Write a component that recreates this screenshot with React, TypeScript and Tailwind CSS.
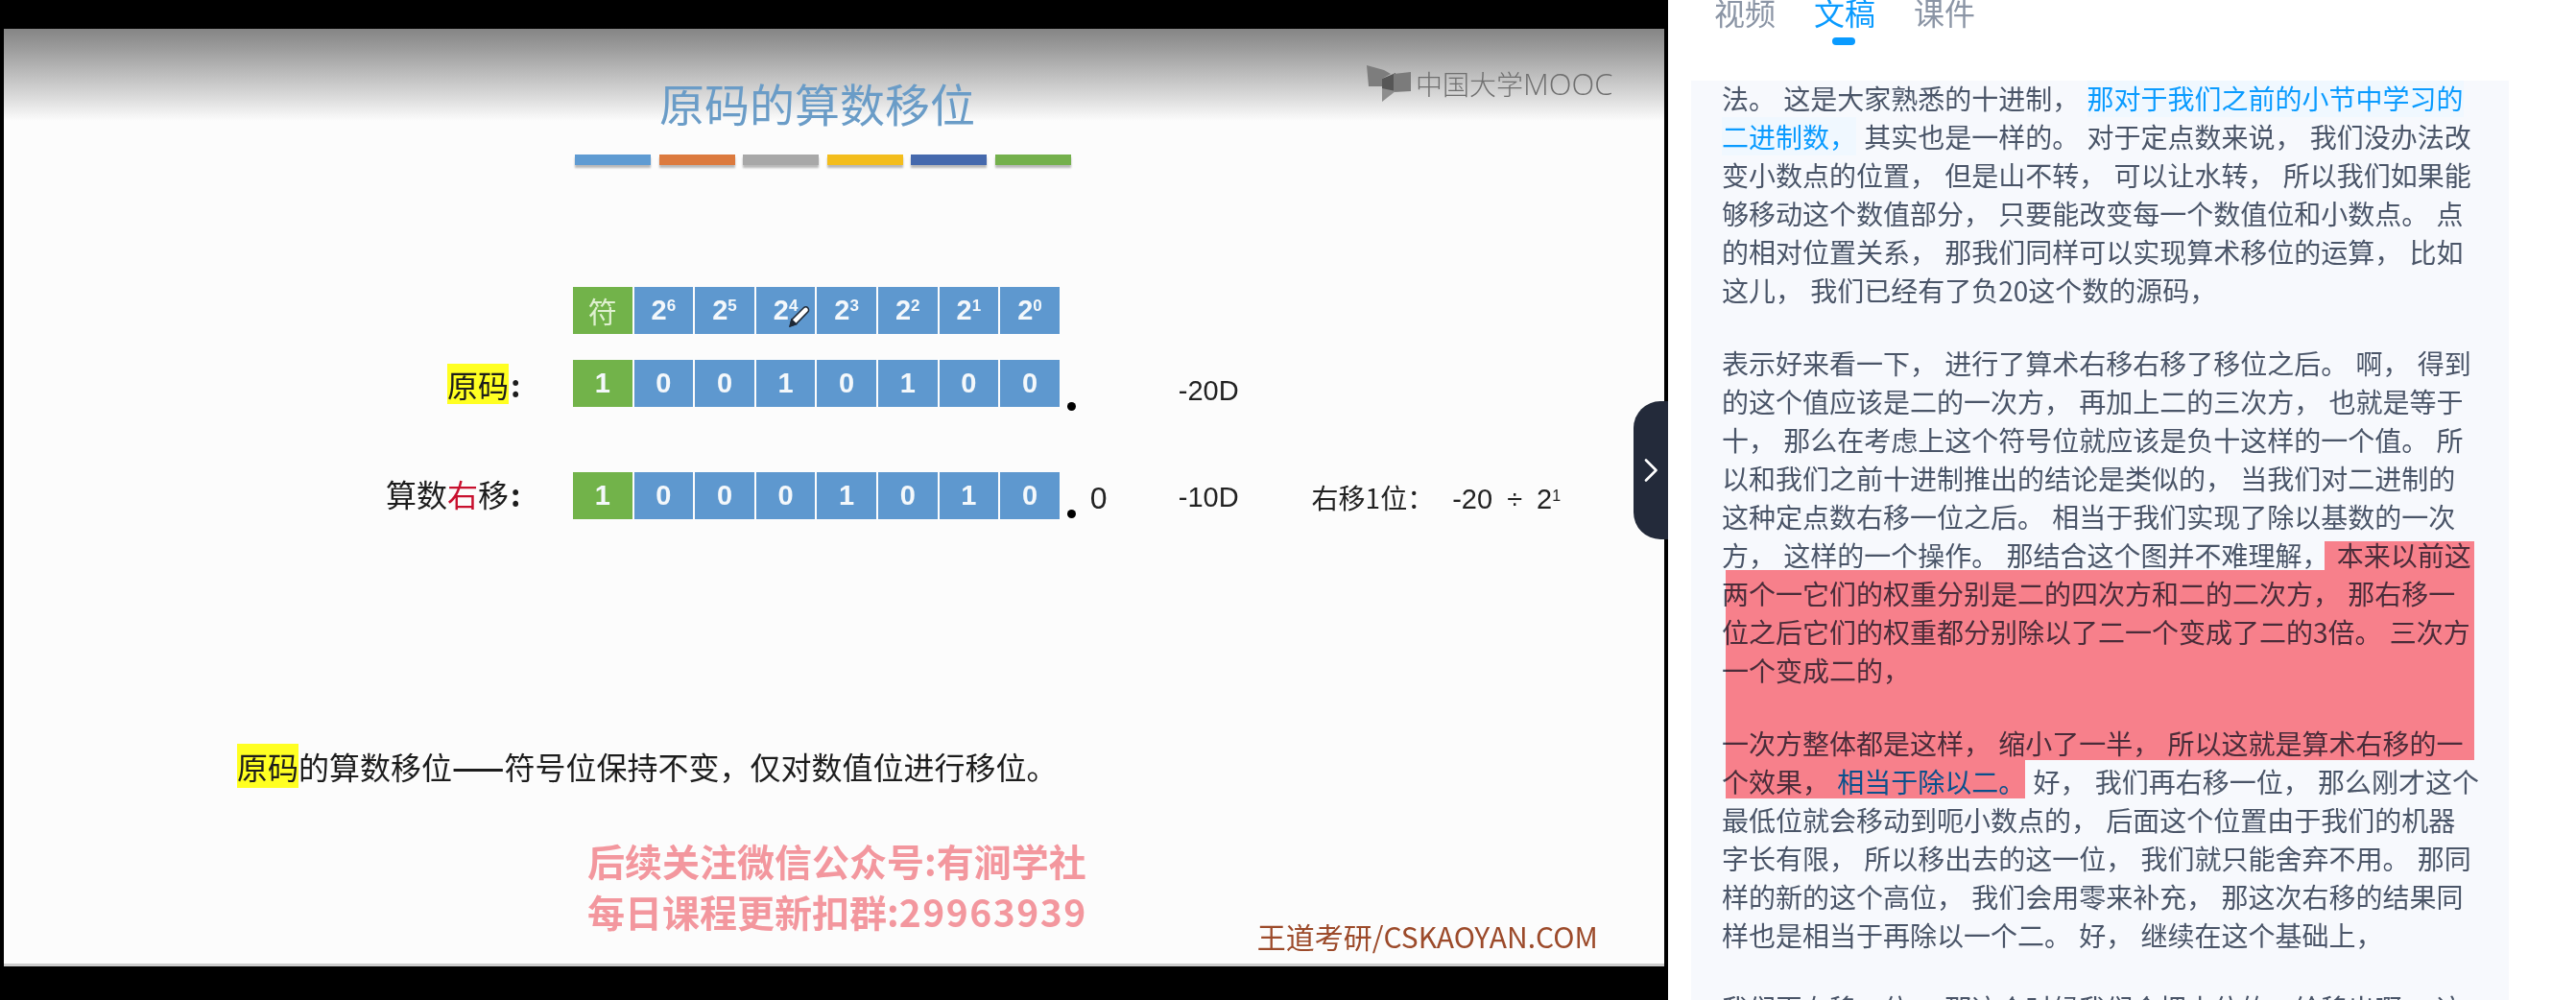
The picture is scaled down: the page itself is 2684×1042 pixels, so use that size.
const CJK = "font-['Noto_Sans_CJK_SC','Liberation_Sans',sans-serif]";

const barColors = [
  "bg-[#5f9bd2]",
  "bg-[#dc7a3e]",
  "bg-[#a8a8a8]",
  "bg-[#f3bd1c]",
  "bg-[#4569ad]",
  "bg-[#74b04c]",
];

const Cell = ({ green, children }: { green?: boolean; children: React.ReactNode }) => (
  <div
    className={`relative flex h-[49px] w-[61.6px] items-center justify-center text-[29px] font-bold text-[#f4f8fb] ${
      green ? "bg-[#72b34a]" : "bg-[#5e98cf]"
    }`}
  >
    {children}
  </div>
);

const Bits = ({ bits }: { bits: string }) => (
  <div className="flex gap-[2px]">
    {bits.split("").map((b, i) => (
      <Cell key={i} green={i === 0}>
        {b}
      </Cell>
    ))}
  </div>
);

const Pen = () => (
  <svg viewBox="0 0 24 24" className="absolute left-[32px] top-[18px] size-[26px]" fill="#fff" stroke="#1f2937" strokeWidth="1.4">
    <path d="M3 21l1.5-6L16 3.5c1.2-1.2 3-1.2 4 0s1.2 3 0 4L8.8 19z" />
    <path d="M3 21l1.5-6 4.3 4z" fill="#1f2937" />
  </svg>
);

const Logo = () => (
  <div className="absolute left-[1420px] top-[38px] flex items-start text-[#6f6f6f]">
    <svg viewBox="0 0 46 38" className="h-[38px] w-[46px]">
      <path d="M0 0L18 5L25 9L16 14V22H2Z" fill="#7d7d7d" />
      <path d="M16 14L30 8V26L16 33Z" fill="#565656" />
      <path d="M28 9L46 7V27L28 28Z" fill="#7b7b7b" />
      <path d="M16 24V38L30 27Z" fill="#8d8d8d" />
    </svg>
    <span className={`ml-[5px] mt-[2px] flex items-center text-[28px] font-light leading-[34px] ${CJK}`}>
      中国大学
      <span className="font-['Open_Sans',sans-serif] text-[31px] font-light">MOOC</span>
    </span>
  </div>
);

const Slide = () => (
  <div className={`relative h-[977px] w-[1730px] overflow-hidden border-b-[3px] border-[#cdcdcd] bg-[#fdfdfd] bg-[linear-gradient(#858585_0px,#9b9b9b_20px,#d9d9d9_70px,#fcfcfc_96px)] pl-[593px] blur-[0.5px] ${CJK}`}>
    <Logo />

    <h1 className="mt-[49px] ml-[90px] text-[47px] leading-[56px] font-normal text-[#6a9cc7]">原码的算数移位</h1>

    <div className="ml-[2px] mt-[26px] flex gap-[8.6px]">
      {barColors.map((c) => (
        <div key={c} className={`h-[11px] w-[79px] shadow-[0_3px_2px_#b9b9b9] ${c}`} />
      ))}
    </div>

    <div className="mt-[127px] flex gap-[2px] font-['Liberation_Sans',sans-serif]">
      <Cell green>
        <span className={`text-[30px] font-normal text-[#dff0d0] ${CJK}`}>符</span>
      </Cell>
      {[6, 5, 4, 3, 2, 1, 0].map((n) => (
        <Cell key={n}>
          <span>
            2<sup className="text-[17px]">{n}</sup>
          </span>
          {n === 4 && <Pen />}
        </Cell>
      ))}
    </div>

    <div className="relative -ml-[593px] mt-[27px] flex pl-[462px] font-['Liberation_Sans',sans-serif]">
      <span className={`flex w-[131px] items-center text-[32px] text-[#1c1c1c] ${CJK}`}>
        <span className="bg-[#ffff22] leading-[42px]">原码</span>
        <span className="ml-[2px] font-bold">:</span>
      </span>
      <Bits bits="10010100" />
      <span className="-mb-[3px] ml-[8px] size-[9px] self-end rounded-full bg-black" />
      <span className="ml-[107px] mt-[14px] self-start text-[29px] leading-[36px] text-[#222]">-20D</span>
    </div>

    <div className="relative -ml-[593px] mt-[67px] flex pl-[398px] font-['Liberation_Sans',sans-serif]">
      <span className={`flex h-[49px] w-[195px] items-center pb-[6px] text-[32px] text-[#1c1c1c] ${CJK}`}>
        算数<span className="text-[#c8102e]">右</span>移
        <span className="ml-[2px] font-bold">:</span>
      </span>
      <Bits bits="10001010" />
      <span className="mb-[1px] ml-[8px] size-[9px] self-end rounded-full bg-black" />
      <span className="ml-[15px] mt-[9px] w-[18px] self-start text-[32px] leading-[36px] text-[#222]">0</span>
      <span className="ml-[74px] mt-[8px] self-start text-[29px] leading-[36px] text-[#222]">-10D</span>
      <span className={`ml-[76px] mt-[8px] self-start text-[28px] leading-[36px] whitespace-nowrap text-[#222] ${CJK}`}>
        右移1位：
        <span className="ml-[19px] font-['Liberation_Sans',sans-serif] text-[29px] [word-spacing:7px]">
          -20 ÷ 2<sup className="text-[16px]">1</sup>
        </span>
      </span>
    </div>

    <p className="-ml-[350px] mt-[235px] whitespace-nowrap text-[32px] leading-[44px] text-[#1c1c1c]">
      <span className="bg-[#ffff22]">原码</span>的算数移位<span className="font-bold">——</span>符号位保持不变，仅对数值位进行移位。
    </p>

    <div className="-ml-[593px] mt-[50px] flex items-end pl-[608px]">
      <p className="text-[39px] leading-[53px] font-bold whitespace-nowrap text-[#f3979e]">
        后续关注微信公众号:有涧学社
        <br />
        每日课程更新扣群:<span className="tracking-[1.5px]">29963939</span>
      </p>
      <p className="-mb-[22px] ml-[177px] text-[30px] whitespace-nowrap text-[#9c4a2a]">王道考研/CSKAOYAN.COM</p>
    </div>
  </div>
);

const paragraphs: React.ReactNode[][] = [
  [
    <>
      法。 这是大家熟悉的十进制， <span className="bg-[#f0f8ff] text-[#0a9bff]">那对于我们之前的小节中学习的</span>
    </>,
    <>
      <span className="bg-[#f0f8ff] text-[#0a9bff]">二进制数，</span> 其实也是一样的。 对于定点数来说， 我们没办法改
    </>,
    "变小数点的位置， 但是山不转， 可以让水转， 所以我们如果能",
    "够移动这个数值部分， 只要能改变每一个数值位和小数点。 点",
    "的相对位置关系， 那我们同样可以实现算术移位的运算， 比如",
    "这儿， 我们已经有了负20这个数的源码，",
  ],
  [
    "表示好来看一下， 进行了算术右移右移了移位之后。 啊， 得到",
    "的这个值应该是二的一次方， 再加上二的三次方， 也就是等于",
    "十， 那么在考虑上这个符号位就应该是负十这样的一个值。 所",
    "以和我们之前十进制推出的结论是类似的， 当我们对二进制的",
    "这种定点数右移一位之后。 相当于我们实现了除以基数的一次",
    "方， 这样的一个操作。 那结合这个图并不难理解， 本来以前这",
    "两个一它们的权重分别是二的四次方和二的二次方， 那右移一",
    "位之后它们的权重都分别除以了二一个变成了二的3倍。 三次方",
    "一个变成二的，",
  ],
  [
    "一次方整体都是这样， 缩小了一半， 所以这就是算术右移的一",
    <>
      个效果， <span className="text-[#0a9bff]">相当于除以二。</span> 好， 我们再右移一位， 那么刚才这个
    </>,
    "最低位就会移动到呃小数点的， 后面这个位置由于我们的机器",
    "字长有限， 所以移出去的这一位， 我们就只能舍弃不用。 那同",
    "样的新的这个高位， 我们会用零来补充， 那这次右移的结果同",
    "样也是相当于再除以一个二。 好， 继续在这个基础上，",
  ],
  ["我们再右移一位， 那这个时候我们会把末位的一给移出啊， 这"],
];

const Transcript = () => (
  <div className={`relative mt-[52px] ml-[24px] w-[852px] flex-1 overflow-hidden bg-[#f7f9fd] pl-[32px] text-[28px] leading-[40px] text-[#4a5568] [word-spacing:2px] ${CJK}`}>
    <div className="-mt-[2px] flex flex-col gap-[36px]">
      {paragraphs.map((lines, i) => (
        <div key={i}>
          {lines.map((line, j) => (
            <div key={j} className="whitespace-pre">
              {line}
            </div>
          ))}
        </div>
      ))}
    </div>
    {/* marker drawn on top of the text */}
    <div className="absolute left-[660px] top-[480px] h-[30px] w-[156px] bg-[#ff838c] mix-blend-multiply" />
    <div className="absolute left-[36px] top-[510px] h-[198px] w-[780px] bg-[#ff838c] mix-blend-multiply" />
    <div className="absolute left-[36px] top-[708px] h-[40px] w-[312px] bg-[#ff838c] mix-blend-multiply" />
  </div>
);

export default function App() {
  const tab = "text-[32px] leading-[40px]";
  return (
    <div className="flex h-[1042px] w-[2684px] overflow-hidden bg-white">
      <div className="relative w-[1738px] shrink-0 bg-black pl-[4px] pt-[30px]">
        <Slide />
        <button className="absolute left-[1702px] top-[418px] flex h-[144px] w-[36px] items-center justify-center rounded-l-[28px] bg-[#232a3a]">
          <svg viewBox="0 0 14 24" className="h-[24px] w-[14px]" fill="none" stroke="#fff" strokeWidth="2.6" strokeLinecap="round" strokeLinejoin="round">
            <path d="M2 1.5L12.5 12L2 22.5" />
          </svg>
        </button>
      </div>

      <div className="flex min-w-0 flex-1 flex-col">
        <div className={`-mt-[8px] ml-[48px] flex gap-[40px] text-[#8b95a5] ${CJK}`}>
          <span className={tab}>视频</span>
          <span className="relative">
            <span className={`${tab} text-[#0a9bff]`}>文稿</span>
            <span className="absolute left-[19px] top-[47px] h-[8px] w-[24px] rounded-[4px] bg-[#0a9bff]" />
          </span>
          <span className={tab}>课件</span>
        </div>
        <Transcript />
      </div>
    </div>
  );
}
